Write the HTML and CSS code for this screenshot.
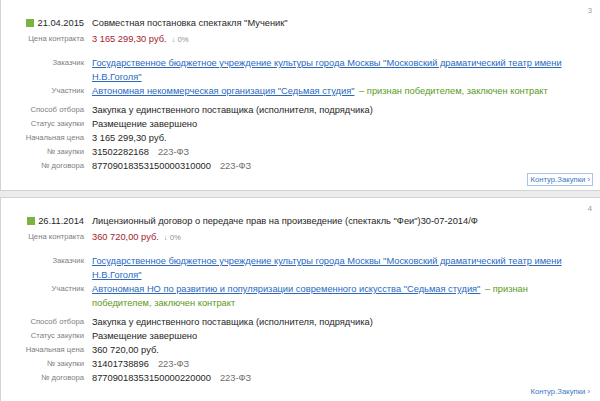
FILE: index.html
```html
<!DOCTYPE html>
<html lang="ru">
<head>
<meta charset="utf-8">
<link rel="stylesheet" href="styles.css">
</head>
<body>
<div class="list">
  <div class="card">
    <span class="num">3</span>
    <div class="grid head">
      <div class="lbl date"><span class="sq"></span>21.04.2015</div>
      <div class="val title">Совместная постановка спектакля "Мученик"</div>
      <div class="lbl">Цена контракта</div>
      <div class="val"><span class="price">3 165 299,30 руб.</span><span class="delta">↓ 0%</span></div>
    </div>
    <div class="grid parties">
      <div class="lbl">Заказчик</div>
      <div class="val"><a class="link" href="#">Государственное бюджетное учреждение культуры города Москвы "Московский драматический театр имени Н.В.Гоголя"</a></div>
      <div class="lbl">Участник</div>
      <div class="val"><a class="link" href="#">Автономная некоммерческая организация "Седьмая студия"</a> <span class="win">– признан победителем, заключен контракт</span></div>
    </div>
    <div class="grid info">
      <div class="lbl">Способ отбора</div>
      <div class="val">Закупка у единственного поставщика (исполнителя, подрядчика)</div>
      <div class="lbl">Статус закупки</div>
      <div class="val">Размещение завершено</div>
      <div class="lbl">Начальная цена</div>
      <div class="val">3 165 299,30 руб.</div>
      <div class="lbl">№ закупки</div>
      <div class="val">31502282168<span class="law">223-ФЗ</span></div>
      <div class="lbl">№ договора</div>
      <div class="val">87709018353150000310000<span class="law">223-ФЗ</span></div>
    </div>
    <div class="foot"><a class="kontur focused" href="#">Контур.Закупки ›</a></div>
  </div>
  <div class="card">
    <span class="num">4</span>
    <div class="grid head">
      <div class="lbl date"><span class="sq"></span>26.11.2014</div>
      <div class="val title">Лицензионный договор о передаче прав на произведение (спектакль "Феи")30-07-2014/Ф</div>
      <div class="lbl">Цена контракта</div>
      <div class="val"><span class="price">360 720,00 руб.</span><span class="delta">↓ 0%</span></div>
    </div>
    <div class="grid parties">
      <div class="lbl">Заказчик</div>
      <div class="val"><a class="link" href="#">Государственное бюджетное учреждение культуры города Москвы "Московский драматический театр имени Н.В.Гоголя"</a></div>
      <div class="lbl">Участник</div>
      <div class="val"><a class="link" href="#">Автономная НО по развитию и популяризации современного искусства "Седьмая студия"</a> <span class="win">– признан победителем, заключен контракт</span></div>
    </div>
    <div class="grid info">
      <div class="lbl">Способ отбора</div>
      <div class="val">Закупка у единственного поставщика (исполнителя, подрядчика)</div>
      <div class="lbl">Статус закупки</div>
      <div class="val">Размещение завершено</div>
      <div class="lbl">Начальная цена</div>
      <div class="val">360 720,00 руб.</div>
      <div class="lbl">№ закупки</div>
      <div class="val">31401738896<span class="law">223-ФЗ</span></div>
      <div class="lbl">№ договора</div>
      <div class="val">87709018353150000220000<span class="law">223-ФЗ</span></div>
    </div>
    <div class="foot"><a class="kontur" href="#">Контур.Закупки ›</a></div>
  </div>
</div>
</body>
</html>
```

FILE: styles.css
```css
html, body {
  margin: 0;
  padding: 0;
}
body {
  font-family: "Liberation Sans", Arial, sans-serif;
  color: #262626;
  background: #fff;
  overflow: hidden;
}
.list {
  margin-top: -1px;
  background: #ececec;
  display: flex;
  flex-direction: column;
  gap: 6px;
}
.card {
  position: relative;
  background: #fff;
  border: 1px solid #d3d3d3;
  border-right: none;
  padding: 16px 0 4px;
}
.num {
  position: absolute;
  top: 6px;
  right: 8px;
  font-size: 7.7px;
  line-height: 10px;
  color: #999;
}
.grid {
  display: grid;
  grid-template-columns: 83px 478px;
  column-gap: 8px;
  align-items: start;
}
.lbl {
  font-size: 7.7px;
  line-height: 14px;
  height: 14px;
  color: #7e7e7e;
  text-align: right;
  white-space: nowrap;
}
.val {
  font-size: 9.3px;
  line-height: 14px;
  color: #262626;
}
.date {
  font-size: 9.3px;
  color: #262626;
  display: flex;
  align-items: center;
  justify-content: flex-end;
}
.sq {
  width: 8px;
  height: 8px;
  background: #79b343;
  margin-right: 3px;
}
.head .val.title {
  margin-bottom: 2px;
}
.price {
  color: #a3232b;
}
.delta {
  font-size: 7.7px;
  color: #8e8e8e;
  margin-left: 5px;
}
.parties {
  margin-top: 9px;
}
.info {
  margin-top: 5px;
}
.link {
  color: #2a69bd;
  text-decoration: underline;
}
.win {
  color: #5a9a20;
  margin-left: 2px;
}
.law {
  color: #6f6f6f;
  margin-left: 9px;
}
.foot {
  display: flex;
  justify-content: flex-end;
  padding-right: 7px;
  margin-top: 0;
}
.kontur {
  font-size: 7.7px;
  line-height: 11px;
  color: #3a78c6;
  text-decoration: none;
  padding: 0 2px;
  border: 1px solid transparent;
}
.kontur.focused {
  border-color: #a6c3ea;
}
```
